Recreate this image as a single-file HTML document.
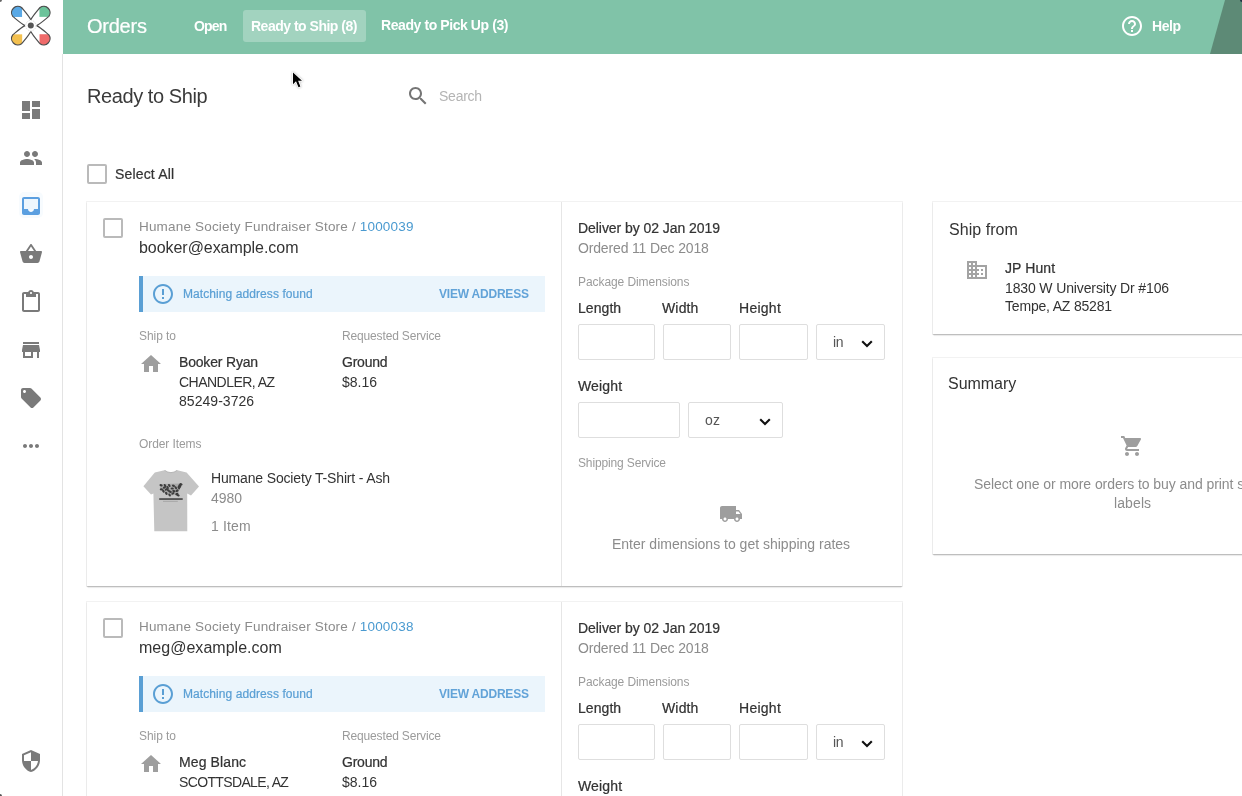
<!DOCTYPE html>
<html><head><meta charset="utf-8">
<style>
*{box-sizing:border-box;margin:0;padding:0}
html,body{width:1242px;height:796px;overflow:hidden;background:#fff;font-family:"Liberation Sans",sans-serif;color:#333}
.t{position:absolute;white-space:nowrap;line-height:1;will-change:transform}
.ic{position:absolute;width:24px;height:24px}
.card{position:absolute;background:#fff;box-shadow:0 0 0 1px rgba(0,0,0,.05),0 1px 1px rgba(0,0,0,.17),0 3px 1px -1px rgba(0,0,0,.05)}
.cb{position:absolute;width:20px;height:20px;border:2px solid #bababa;border-radius:2px}
.inp{position:absolute;border:1px solid #dedede;border-radius:2px;height:36px;background:#fff}
.alert{position:absolute;left:139px;width:406px;height:36px;background:#ebf5fc;border-left:4px solid #5a9fd4}
.chev{position:absolute;width:12px;height:8px}
</style></head><body>
<!-- sidebar -->
<div style="position:absolute;left:62px;top:54px;width:1px;height:742px;background:#e3e3e3"></div>
<svg style="position:absolute;left:0;top:0" width="62" height="52" viewBox="0 0 62 52">
 <defs><clipPath id="lc"><path d="M0,0 L-5.6,0 C-9.5,-2.0 -13.4,-5.6 -17.4,-8.9 A6.1 6.1 0 0 1 -8.9,-17.4 C-5.6,-13.4 -2.0,-9.5 0,-5.6 Z"/></clipPath></defs>
 <g transform="translate(30.8,25.6) scale(1.04)">
  <rect x="-30" y="-30" width="21.6" height="21.7" fill="#5aa9e6" clip-path="url(#lc)"/>
  <g transform="rotate(90)"><rect x="-30" y="-30" width="21.6" height="21.7" fill="#6cc39a" clip-path="url(#lc)"/></g>
  <g transform="rotate(180)"><rect x="-30" y="-30" width="21.6" height="21.7" fill="#ef6a6a" clip-path="url(#lc)"/></g>
  <g transform="rotate(270)"><rect x="-30" y="-30" width="21.6" height="21.7" fill="#f3c04f" clip-path="url(#lc)"/></g>
  <path id="lobe" d="M-5.6,0 C-9.5,-2.0 -13.4,-5.6 -17.4,-8.9 A6.1 6.1 0 0 1 -8.9,-17.4 C-5.6,-13.4 -2.0,-9.5 0,-5.6" fill="none" stroke="#4d4d4d" stroke-width="1.15"/>
  <use href="#lobe" transform="rotate(90)"/>
  <use href="#lobe" transform="rotate(180)"/>
  <use href="#lobe" transform="rotate(270)"/>
  <circle r="5" fill="none" stroke="#d5d5d5" stroke-width="0.8" stroke-dasharray="1.3 1"/>
  <circle r="2.9" fill="#555"/>
 </g>
</svg>
<svg class="ic" style="left:19px;top:98px" viewBox="0 0 24 24"><path fill="#7a7a7a" d="M3 13h8V3H3v10zm0 8h8v-6H3v6zm10 0h8V11h-8v10zm0-18v6h8V3h-8z"/></svg>
<svg class="ic" style="left:19px;top:146px" viewBox="0 0 24 24"><path fill="#7a7a7a" d="M16 11c1.66 0 2.99-1.34 2.99-3S17.66 5 16 5c-1.66 0-3 1.34-3 3s1.34 3 3 3zm-8 0c1.660 0 2.99-1.34 2.99-3S9.66 5 8 5C6.34 5 5 6.34 5 8s1.34 3 3 3zm0 2c-2.33 0-7 1.17-7 3.5V19h14v-2.5c0-2.330-4.67-3.5-7-3.5zm8 0c-.29 0-.62.02-.97.05 1.16.84 1.97 1.97 1.97 3.45V19h6v-2.5c0-2.33-4.67-3.5-7-3.5z"/></svg>
<div style="position:absolute;left:19px;top:192px;width:24px;height:26px;border-radius:5px;background:#f7fbfe"></div>
<svg class="ic" style="left:19px;top:194px" viewBox="0 0 24 24"><rect x="4.5" y="4.5" width="15" height="11" fill="#edf6fd"/><path fill="#5b9fe0" d="M19 3H4.99c-1.11 0-1.98.89-1.98 2L3 19c0 1.1.88 2 1.990 2H19c1.1 0 2-.9 2-2V5c0-1.11-.9-2-2-2zm0 12h-4c0 1.66-1.35 3-3 3s-3-1.34-3-3H4.99V5H19v10z"/></svg>
<svg class="ic" style="left:19px;top:242px" viewBox="0 0 24 24"><path fill="#7a7a7a" d="M17.21 9l-4.38-6.56c-.19-.28-.51-.42-.83-.42-.32 0-.64.14-.83.43L6.79 9H2c-.55 0-1 .45-1 1 0 .09.01.18.04.27l2.54 9.27c.23.84 1 1.46 1.92 1.46h13c.92 0 1.69-.62 1.93-1.46l2.540-9.27L23 10c0-.55-.45-1-1-1h-4.79zM9 9l3-4.4L15 9H9zm3 8c-1.1 0-2-.9-2-2s.9-2 2-2 2 .9 2 2-.9 2-2 2z"/></svg>
<svg class="ic" style="left:19px;top:290px" viewBox="0 0 24 24"><path fill="#7a7a7a" d="M19 2h-4.18C14.4.84 13.3 0 12 0c-1.3 0-2.4.84-2.82 2H5c-1.1 0-2 .9-2 2v16c0 1.1.9 2 2 2h14c1.1 0 2-.9 2-2V4c0-1.1-.9-2-2-2zm-7 0c.55 0 1 .45 1 1s-.45 1-1 1-1-.45-1-1 .45-1 1-1zm7 18H5V4h2v3h10V4h2v16z"/></svg>
<svg class="ic" style="left:19px;top:338px" viewBox="0 0 24 24"><path fill="#7a7a7a" d="M20 4H4v2h16V4zm1 10v-2l-1-5H4l-1 5v2h1v6h10v-6h4v6h2v-6h1zm-9 4H6v-4h6v4z"/></svg>
<svg class="ic" style="left:19px;top:386px" viewBox="0 0 24 24"><path fill="#7a7a7a" d="M21.41 11.58l-9-9C12.05 2.22 11.55 2 11 2H4c-1.1 0-2 .9-2 2v7c0 .55.22 1.05.59 1.42l9 9c.36.36.86.58 1.41.58.55 0 1.05-.22 1.41-.59l7-7c.37-.36.59-.86.59-1.41 0-.55-.23-1.06-.59-1.42zM5.5 7C4.67 7 4 6.33 4 5.5S4.67 4 5.5 4 7 4.67 7 5.5 6.33 7 5.5 7z"/></svg>
<svg class="ic" style="left:19px;top:434px" viewBox="0 0 24 24"><path fill="#7a7a7a" d="M6 10c-1.1 0-2 .9-2 2s.9 2 2 2 2-.9 2-2-.9-2-2-2zm12 0c-1.1 0-2 .9-2 2s.9 2 2 2 2-.9 2-2-.9-2-2-2zm-6 0c-1.1 0-2 .9-2 2s.9 2 2 2 2-.9 2-2-.9-2-2-2z"/></svg>
<svg class="ic" style="left:19px;top:749px" viewBox="0 0 24 24"><path fill="#7a7a7a" d="M12 1L3 5v6c0 5.55 3.84 10.74 9 12 5.16-1.26 9-6.45 9-12V5l-9-4zm0 10.99h7c-.53 4.12-3.28 7.79-7 8.94V12H5V6.3l7-3.11v8.8z"/></svg>

<!-- header -->
<div style="position:absolute;left:63px;top:0;width:1179px;height:54px;background:#80c3a8;overflow:hidden">
  <div style="position:absolute;left:180px;top:10px;width:123px;height:32px;border-radius:3px;background:rgba(255,255,255,.27)"></div>
  <svg style="position:absolute;left:1140px;top:0" width="60" height="54"><polygon points="22,0 60,0 60,54 7,54" fill="#5d8a76"/></svg>
</div>
<svg class="ic" style="left:1120px;top:14px" viewBox="0 0 24 24"><path fill="#fff" d="M11 18h2v-2h-2v2zm1-16C6.48 2 2 6.48 2 12s4.48 10 10 10 10-4.48 10-10S17.52 2 12 2zm0 18c-4.41 0-8-3.59-8-8s3.59-8 8-8 8 3.59 8 8-3.59 8-8 8zm0-14c-2.21 0-4 1.79-4 4h2c0-1.1.9-2 2-2s2 .9 2 2c0 2-3 1.75-3 5h2c0-2.25 3-2.5 3-5 0-2.21-1.79-4-4-4z"/></svg>

<!-- search -->
<svg class="ic" style="left:406px;top:84px" viewBox="0 0 24 24"><path fill="#757575" d="M15.5 14h-.79l-.28-.27C15.41 12.59 16 11.11 16 9.5 16 5.910 13.09 3 9.5 3S3 5.91 3 9.5 5.91 16 9.5 16c1.61 0 3.09-.59 4.23-1.57l.27.28v.79l5 4.99L20.49 19l-4.99-5zm-6 0C7.01 14 5 11.99 5 9.5S7.01 5 9.5 5 14 7.01 14 9.5 11.99 14 9.5 14z"/></svg>
<div class="cb" style="left:87px;top:164px"></div>

<div class="card" style="left:87px;top:202px;width:815px;height:384px"></div>
<div style="position:absolute;left:561px;top:202px;width:1px;height:384px;background:#e6e6e6"></div>
<div class="cb" style="left:103px;top:218px"></div>
<div class="alert" style="top:276px"></div>
<svg class="ic" style="left:151px;top:282px" viewBox="0 0 24 24"><path fill="#5a9fd4" d="M11 15h2v2h-2zm0-8h2v6h-2zm.99-5C6.47 2 2 6.48 2 12s4.47 10 9.99 10C17.52 22 22 17.52 22 12S17.52 2 11.99 2zM12 20c-4.42 0-8-3.58-8-8s3.58-8 8-8 8 3.58 8 8-3.58 8-8 8z"/></svg>
<svg class="ic" style="left:139px;top:352px" viewBox="0 0 24 24"><path fill="#9e9e9e" d="M10 20v-6h4v6h5v-8h3L12 3 2 12h3v8z"/></svg>
<div class="inp" style="left:578px;top:324px;width:77px"></div>
<div class="inp" style="left:663px;top:324px;width:68px"></div>
<div class="inp" style="left:739px;top:324px;width:69px"></div>
<div class="inp" style="left:816px;top:324px;width:69px"></div>
<svg class="chev" style="left:861px;top:340px" viewBox="0 0 12 8"><polyline points="1.2,1.2 6,6 10.8,1.2" fill="none" stroke="#111" stroke-width="2.1"/></svg>
<div class="inp" style="left:578px;top:402px;width:102px"></div>
<div class="inp" style="left:688px;top:402px;width:95px"></div>
<svg class="chev" style="left:759px;top:418px" viewBox="0 0 12 8"><polyline points="1.2,1.2 6,6 10.8,1.2" fill="none" stroke="#111" stroke-width="2.1"/></svg>
<svg class="ic" style="left:719px;top:502px" viewBox="0 0 24 24"><path fill="#9e9e9e" d="M20 8h-3V4H3c-1.1 0-2 .9-2 2v11h2c0 1.66 1.34 3 3 3s3-1.34 3-3h6c0 1.66 1.34 3 3 3s3-1.34 3-3h2v-5l-3-4zM6 18.5c-.83 0-1.5-.67-1.5-1.5s.67-1.5 1.5-1.5 1.5.67 1.5 1.5-.67 1.5-1.5 1.5zm13.5-9l1.96 2.5H17V9.5h2.5zm-1.5 9c-.83 0-1.5-.67-1.5-1.5s.67-1.5 1.5-1.5 1.5.67 1.5 1.5-.67 1.5-1.5 1.5z"/></svg>
<svg style="position:absolute;left:143px;top:470px" width="57" height="62" viewBox="0 0 57 62">
<path d="M21.5,0.3 Q28,5 34.3,0.3 L43.6,2.6 L56,16.5 L48,25.5 L44.2,23.5 L44.3,61.3 L11.3,61.3 L10.4,23.6 L8,24.6 L0.4,16.2 L11.8,2.5 Z" fill="#c5c5c5"/>
<path d="M21.5,0.3 Q28,5 34.3,0.3" fill="none" stroke="#b5b5b5" stroke-width="1"/>
<path d="M16.8,14 L39,13.6 L37.5,18 L35.5,22 L36,26 L33,24.5 L29,25.5 L26.5,25.8 L22.5,23.8 L19.5,21.8 L17.2,18.5 Z" fill="#a9a9a9"/><g fill="#3d3d3d"><ellipse cx="18.1" cy="15.2" rx="1.65" ry="1.1" transform="rotate(20 18.1 15.2)"/><ellipse cx="22" cy="15.5" rx="1.65" ry="1.1" transform="rotate(60 22 15.5)"/><ellipse cx="26.3" cy="15.5" rx="1.65" ry="1.1" transform="rotate(60 26.3 15.5)"/><ellipse cx="30.5" cy="15.8" rx="1.65" ry="1.1" transform="rotate(20 30.5 15.8)"/><ellipse cx="37" cy="15.5" rx="1.65" ry="1.1" transform="rotate(40 37 15.5)"/><ellipse cx="35.8" cy="17.8" rx="1.65" ry="1.1" transform="rotate(60 35.8 17.8)"/><ellipse cx="21.4" cy="17.5" rx="1.65" ry="1.1" transform="rotate(-30 21.4 17.5)"/><ellipse cx="24.6" cy="17.5" rx="1.65" ry="1.1" transform="rotate(60 24.6 17.5)"/><ellipse cx="29.2" cy="18.5" rx="1.65" ry="1.1" transform="rotate(0 29.2 18.5)"/><ellipse cx="32.8" cy="17.8" rx="1.65" ry="1.1" transform="rotate(60 32.8 17.8)"/><ellipse cx="18.4" cy="19.4" rx="1.65" ry="1.1" transform="rotate(0 18.4 19.4)"/><ellipse cx="23.3" cy="19.4" rx="1.65" ry="1.1" transform="rotate(-30 23.3 19.4)"/><ellipse cx="25.3" cy="20.4" rx="1.65" ry="1.1" transform="rotate(40 25.3 20.4)"/><ellipse cx="20.4" cy="21.1" rx="1.65" ry="1.1" transform="rotate(60 20.4 21.1)"/><ellipse cx="27.3" cy="21.7" rx="1.65" ry="1.1" transform="rotate(20 27.3 21.7)"/><ellipse cx="30.9" cy="21.1" rx="1.65" ry="1.1" transform="rotate(20 30.9 21.1)"/><ellipse cx="34.1" cy="20.7" rx="1.65" ry="1.1" transform="rotate(-30 34.1 20.7)"/><ellipse cx="23.3" cy="23.4" rx="1.65" ry="1.1" transform="rotate(60 23.3 23.4)"/><ellipse cx="26.6" cy="25" rx="1.65" ry="1.1" transform="rotate(60 26.6 25)"/><ellipse cx="29.9" cy="23.4" rx="1.65" ry="1.1" transform="rotate(-30 29.9 23.4)"/><ellipse cx="33.8" cy="24" rx="1.65" ry="1.1" transform="rotate(-30 33.8 24)"/><ellipse cx="35.1" cy="25.3" rx="1.65" ry="1.1" transform="rotate(20 35.1 25.3)"/><ellipse cx="38" cy="14.2" rx="1.65" ry="1.1" transform="rotate(20 38 14.2)"/><ellipse cx="36.5" cy="16.6" rx="1.65" ry="1.1" transform="rotate(20 36.5 16.6)"/></g>
<rect x="16.2" y="28.2" width="23.5" height="1.7" fill="#4a4a4a"/>
<rect x="20" y="30.9" width="14.8" height="0.7" fill="#9a9a9a"/>
</svg>
<div class="card" style="left:87px;top:602px;width:815px;height:384px"></div>
<div style="position:absolute;left:561px;top:602px;width:1px;height:384px;background:#e6e6e6"></div>
<div class="cb" style="left:103px;top:618px"></div>
<div class="alert" style="top:676px"></div>
<svg class="ic" style="left:151px;top:682px" viewBox="0 0 24 24"><path fill="#5a9fd4" d="M11 15h2v2h-2zm0-8h2v6h-2zm.99-5C6.47 2 2 6.48 2 12s4.47 10 9.99 10C17.52 22 22 17.52 22 12S17.52 2 11.99 2zM12 20c-4.42 0-8-3.58-8-8s3.58-8 8-8 8 3.58 8 8-3.58 8-8 8z"/></svg>
<svg class="ic" style="left:139px;top:752px" viewBox="0 0 24 24"><path fill="#9e9e9e" d="M10 20v-6h4v6h5v-8h3L12 3 2 12h3v8z"/></svg>
<div class="inp" style="left:578px;top:724px;width:77px"></div>
<div class="inp" style="left:663px;top:724px;width:68px"></div>
<div class="inp" style="left:739px;top:724px;width:69px"></div>
<div class="inp" style="left:816px;top:724px;width:69px"></div>
<svg class="chev" style="left:861px;top:740px" viewBox="0 0 12 8"><polyline points="1.2,1.2 6,6 10.8,1.2" fill="none" stroke="#111" stroke-width="2.1"/></svg>
<div class="inp" style="left:578px;top:802px;width:102px"></div>
<div class="inp" style="left:688px;top:802px;width:95px"></div>
<svg class="chev" style="left:759px;top:818px" viewBox="0 0 12 8"><polyline points="1.2,1.2 6,6 10.8,1.2" fill="none" stroke="#111" stroke-width="2.1"/></svg>
<svg class="ic" style="left:719px;top:902px" viewBox="0 0 24 24"><path fill="#9e9e9e" d="M20 8h-3V4H3c-1.1 0-2 .9-2 2v11h2c0 1.66 1.34 3 3 3s3-1.34 3-3h6c0 1.66 1.34 3 3 3s3-1.34 3-3h2v-5l-3-4zM6 18.5c-.83 0-1.5-.67-1.5-1.5s.67-1.5 1.5-1.5 1.5.67 1.5 1.5-.67 1.5-1.5 1.5zm13.5-9l1.96 2.5H17V9.5h2.5zm-1.5 9c-.83 0-1.5-.67-1.5-1.5s.67-1.5 1.5-1.5 1.5.67 1.5 1.5-.67 1.5-1.5 1.5z"/></svg>



<!-- right cards -->
<div class="card" style="left:933px;top:202px;width:400px;height:132px"></div>
<svg class="ic" style="left:965px;top:258px" viewBox="0 0 24 24"><path fill="#a3a3a3" d="M12 7V3H2v18h20V7H12zM6 19H4v-2h2v2zm0-4H4v-2h2v2zm0-4H4V9h2v2zm0-4H4V5h2v2zm4 12H8v-2h2v2zm0-4H8v-2h2v2zm0-4H8V9h2v2zm0-4H8V5h2v2zm10 12h-8v-2h2v-2h-2v-2h2v-2h-2V9h8v10zm-2-8h-2v2h2v-2zm0 4h-2v2h2v-2z"/></svg>
<div class="card" style="left:933px;top:358px;width:400px;height:196px"></div>
<svg class="ic" style="left:1120px;top:434px" viewBox="0 0 24 24"><path fill="#9e9e9e" d="M7 18c-1.1 0-1.99.9-1.99 2S5.9 22 7 22s2-.9 2-2-.9-2-2-2zM1 2v2h2l3.6 7.59-1.35 2.45c-.16.28-.25.61-.25.96 0 1.1.9 2 2 2h12v-2H7.42c-.14 0-.25-.11-.25-.25l.03-.12.9-1.63h7.45c.75 0 1.41-.41 1.75-1.03l3.58-6.49c.08-.14.12-.31.12-.48 0-.55-.45-1-1-1H5.21l-.94-2H1zm16 16c-1.1 0-1.99.9-1.99 2s.89 2 1.99 2 2-.9 2-2-.9-2-2-2z"/></svg>

<div class="t" style="left:86.7px;top:16.0px;font-size:20px;font-weight:400;color:#fff;letter-spacing:-0.245px;-webkit-text-stroke:0.22px currentColor;">Orders</div>
<div class="t" style="left:193.8px;top:18.7px;font-size:14px;font-weight:700;color:#fff;letter-spacing:-0.820px;">Open</div>
<div class="t" style="left:251.0px;top:18.7px;font-size:14px;font-weight:700;color:#fff;letter-spacing:-0.496px;">Ready to Ship (8)</div>
<div class="t" style="left:381.3px;top:18.3px;font-size:14px;font-weight:700;color:#fff;letter-spacing:-0.419px;">Ready to Pick Up (3)</div>
<div class="t" style="left:1152.3px;top:18.8px;font-size:14px;font-weight:700;color:#fff;letter-spacing:-0.408px;">Help</div>
<div class="t" style="left:87.4px;top:85.6px;font-size:20px;font-weight:400;color:#3a3a3a;letter-spacing:-0.420px;">Ready to Ship</div>
<div class="t" style="left:438.8px;top:88.5px;font-size:14px;font-weight:400;color:#b4b4b4;letter-spacing:-0.248px;">Search</div>
<div class="t" style="left:114.7px;top:166.7px;font-size:14px;font-weight:400;color:#333;letter-spacing:0.170px;-webkit-text-stroke:0.22px currentColor;">Select All</div>
<div class="t" style="left:139.0px;top:219.8px;font-size:13.5px;font-weight:400;color:#8c8c8c;letter-spacing:0.181px;">Humane Society Fundraiser Store / <span style="color:#4a9ad0">1000039</span></div>
<div class="t" style="left:138.9px;top:240.2px;font-size:16px;font-weight:400;color:#333;letter-spacing:-0.049px;">booker@example.com</div>
<div class="t" style="left:183.0px;top:287.8px;font-size:12px;font-weight:400;color:#5a9fd4;letter-spacing:0.079px;-webkit-text-stroke:0.22px currentColor;">Matching address found</div>
<div class="t" style="left:438.8px;top:288.2px;font-size:12px;font-weight:700;color:#62a3d8;letter-spacing:-0.207px;">VIEW ADDRESS</div>
<div class="t" style="left:139.0px;top:330.4px;font-size:12px;font-weight:400;color:#9b9b9b;letter-spacing:-0.067px;">Ship to</div>
<div class="t" style="left:341.9px;top:330.4px;font-size:12px;font-weight:400;color:#9b9b9b;letter-spacing:-0.152px;">Requested Service</div>
<div class="t" style="left:178.6px;top:354.8px;font-size:14px;font-weight:400;color:#333;letter-spacing:-0.182px;-webkit-text-stroke:0.22px currentColor;">Booker Ryan</div>
<div class="t" style="left:178.6px;top:374.7px;font-size:14px;font-weight:400;color:#333;letter-spacing:-0.527px;">CHANDLER, AZ</div>
<div class="t" style="left:178.6px;top:394.0px;font-size:14px;font-weight:400;color:#333;letter-spacing:0.041px;">85249-3726</div>
<div class="t" style="left:341.8px;top:354.8px;font-size:14px;font-weight:400;color:#333;letter-spacing:-0.217px;-webkit-text-stroke:0.22px currentColor;">Ground</div>
<div class="t" style="left:341.8px;top:374.8px;font-size:14px;font-weight:400;color:#333;letter-spacing:0.018px;">$8.16</div>
<div class="t" style="left:577.8px;top:220.5px;font-size:14px;font-weight:400;color:#333;letter-spacing:-0.052px;-webkit-text-stroke:0.22px currentColor;">Deliver by 02 Jan 2019</div>
<div class="t" style="left:577.8px;top:240.9px;font-size:14px;font-weight:400;color:#8c8c8c;letter-spacing:-0.155px;">Ordered 11 Dec 2018</div>
<div class="t" style="left:577.9px;top:276.2px;font-size:12px;font-weight:400;color:#9b9b9b;letter-spacing:-0.075px;">Package Dimensions</div>
<div class="t" style="left:577.8px;top:300.8px;font-size:14px;font-weight:400;color:#333;letter-spacing:0.058px;-webkit-text-stroke:0.22px currentColor;">Length</div>
<div class="t" style="left:662.3px;top:300.8px;font-size:14px;font-weight:400;color:#333;letter-spacing:0.156px;-webkit-text-stroke:0.22px currentColor;">Width</div>
<div class="t" style="left:739.3px;top:300.8px;font-size:14px;font-weight:400;color:#333;letter-spacing:0.270px;-webkit-text-stroke:0.22px currentColor;">Height</div>
<div class="t" style="left:833.3px;top:334.8px;font-size:14px;font-weight:400;color:#555;letter-spacing:-0.386px;">in</div>
<div class="t" style="left:577.8px;top:379.0px;font-size:14px;font-weight:400;color:#333;letter-spacing:0.158px;-webkit-text-stroke:0.22px currentColor;">Weight</div>
<div class="t" style="left:138.9px;top:438.1px;font-size:12px;font-weight:400;color:#9b9b9b;letter-spacing:-0.090px;">Order Items</div>
<div class="t" style="left:210.9px;top:471.2px;font-size:14px;font-weight:400;color:#333;letter-spacing:-0.158px;">Humane Society T-Shirt - Ash</div>
<div class="t" style="left:210.9px;top:490.8px;font-size:14px;font-weight:400;color:#8c8c8c;letter-spacing:-0.012px;">4980</div>
<div class="t" style="left:210.9px;top:518.5px;font-size:14px;font-weight:400;color:#8c8c8c;letter-spacing:0.143px;">1 Item</div>
<div class="t" style="left:704.8px;top:413.0px;font-size:14px;font-weight:400;color:#555;letter-spacing:0.123px;">oz</div>
<div class="t" style="left:577.9px;top:456.5px;font-size:12px;font-weight:400;color:#9b9b9b;letter-spacing:-0.140px;">Shipping Service</div>
<div class="t" style="left:612.3px;top:536.8px;font-size:14px;font-weight:400;color:#8c8c8c;letter-spacing:-0.001px;">Enter dimensions to get shipping rates</div>
<div class="t" style="left:139.0px;top:619.8px;font-size:13.5px;font-weight:400;color:#8c8c8c;letter-spacing:0.181px;">Humane Society Fundraiser Store / <span style="color:#4a9ad0">1000038</span></div>
<div class="t" style="left:138.9px;top:640.2px;font-size:16px;font-weight:400;color:#333;letter-spacing:0.019px;">meg@example.com</div>
<div class="t" style="left:183.0px;top:687.8px;font-size:12px;font-weight:400;color:#5a9fd4;letter-spacing:0.079px;-webkit-text-stroke:0.22px currentColor;">Matching address found</div>
<div class="t" style="left:438.8px;top:688.2px;font-size:12px;font-weight:700;color:#62a3d8;letter-spacing:-0.207px;">VIEW ADDRESS</div>
<div class="t" style="left:139.0px;top:730.4px;font-size:12px;font-weight:400;color:#9b9b9b;letter-spacing:-0.067px;">Ship to</div>
<div class="t" style="left:341.9px;top:730.4px;font-size:12px;font-weight:400;color:#9b9b9b;letter-spacing:-0.152px;">Requested Service</div>
<div class="t" style="left:178.6px;top:754.8px;font-size:14px;font-weight:400;color:#333;letter-spacing:0.120px;-webkit-text-stroke:0.22px currentColor;">Meg Blanc</div>
<div class="t" style="left:178.6px;top:774.7px;font-size:14px;font-weight:400;color:#333;letter-spacing:-0.641px;">SCOTTSDALE, AZ</div>
<div class="t" style="left:341.8px;top:754.8px;font-size:14px;font-weight:400;color:#333;letter-spacing:-0.217px;-webkit-text-stroke:0.22px currentColor;">Ground</div>
<div class="t" style="left:341.8px;top:774.8px;font-size:14px;font-weight:400;color:#333;letter-spacing:0.018px;">$8.16</div>
<div class="t" style="left:577.8px;top:620.5px;font-size:14px;font-weight:400;color:#333;letter-spacing:-0.052px;-webkit-text-stroke:0.22px currentColor;">Deliver by 02 Jan 2019</div>
<div class="t" style="left:577.8px;top:640.9px;font-size:14px;font-weight:400;color:#8c8c8c;letter-spacing:-0.155px;">Ordered 11 Dec 2018</div>
<div class="t" style="left:577.9px;top:676.2px;font-size:12px;font-weight:400;color:#9b9b9b;letter-spacing:-0.075px;">Package Dimensions</div>
<div class="t" style="left:577.8px;top:700.8px;font-size:14px;font-weight:400;color:#333;letter-spacing:0.058px;-webkit-text-stroke:0.22px currentColor;">Length</div>
<div class="t" style="left:662.3px;top:700.8px;font-size:14px;font-weight:400;color:#333;letter-spacing:0.156px;-webkit-text-stroke:0.22px currentColor;">Width</div>
<div class="t" style="left:739.3px;top:700.8px;font-size:14px;font-weight:400;color:#333;letter-spacing:0.270px;-webkit-text-stroke:0.22px currentColor;">Height</div>
<div class="t" style="left:833.3px;top:734.8px;font-size:14px;font-weight:400;color:#555;letter-spacing:-0.386px;">in</div>
<div class="t" style="left:577.8px;top:779.0px;font-size:14px;font-weight:400;color:#333;letter-spacing:0.158px;-webkit-text-stroke:0.22px currentColor;">Weight</div>
<div class="t" style="left:948.9px;top:221.9px;font-size:16px;font-weight:400;color:#333;letter-spacing:0.051px;">Ship from</div>
<div class="t" style="left:1005.0px;top:260.8px;font-size:14px;font-weight:400;color:#333;letter-spacing:0.096px;-webkit-text-stroke:0.22px currentColor;">JP Hunt</div>
<div class="t" style="left:1005.0px;top:280.5px;font-size:14px;font-weight:400;color:#333;letter-spacing:-0.132px;">1830 W University Dr #106</div>
<div class="t" style="left:1005.0px;top:299.4px;font-size:14px;font-weight:400;color:#333;letter-spacing:-0.188px;">Tempe, AZ 85281</div>
<div class="t" style="left:948.4px;top:376.3px;font-size:16px;font-weight:400;color:#333;letter-spacing:-0.029px;">Summary</div>
<div class="t" style="left:973.7px;top:477.1px;font-size:14px;font-weight:400;color:#8c8c8c;letter-spacing:-0.068px;">Select one or more orders to buy and print shipping</div>
<div class="t" style="left:1113.5px;top:496.3px;font-size:14px;font-weight:400;color:#8c8c8c;letter-spacing:0.105px;">labels</div>
<div style="position:absolute;left:0;top:0;width:2px;height:2px;background:#666;border-radius:0 0 2px 0"></div><div style="position:absolute;left:1240px;top:0;width:2px;height:2px;background:#234;border-radius:0 0 0 2px"></div><div style="position:absolute;left:0;top:794px;width:2px;height:2px;background:#555;border-radius:0 2px 0 0"></div>
<svg style="position:absolute;left:285px;top:66px" width="24" height="28" viewBox="285 66 24 28"><path d="M293,72.6 L293,84.2 L296,81.3 L298.5,87.2 L300.4,86.4 L298.1,80.8 L302,80.7 Z" fill="#000" stroke="#fff" stroke-width="1.6" stroke-linejoin="round" paint-order="stroke" style="filter:drop-shadow(0 0.8px 0.8px rgba(0,0,0,.3))"/></svg>
</body></html>
